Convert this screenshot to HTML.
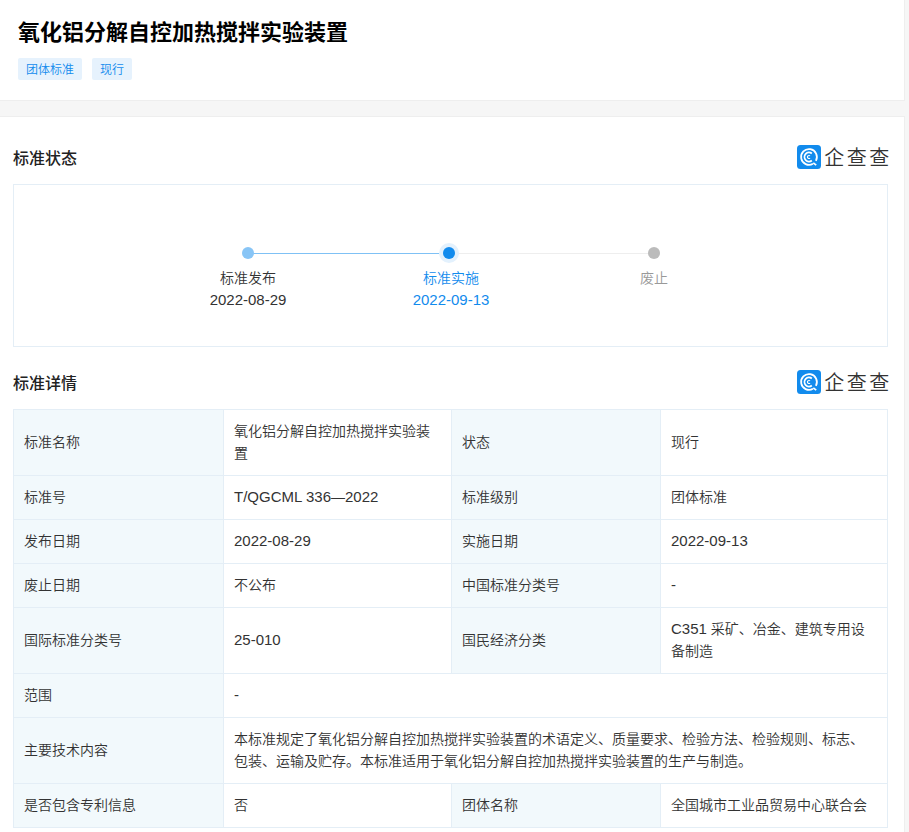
<!DOCTYPE html>
<html lang="zh-CN">
<head>
<meta charset="utf-8">
<title>氧化铝分解自控加热搅拌实验装置</title>
<style>
*{box-sizing:border-box;margin:0;padding:0}
html,body{width:909px;height:832px;overflow:hidden;background:#f6f6f6}
body{font-family:"Liberation Sans","Noto Sans CJK SC",sans-serif;font-size:14px;color:#333;font-weight:350;position:relative}
.card{position:absolute;left:0;width:905px;background:#fff;border-right:1px solid #eee;border-bottom:1px solid #eee}
#c1{top:0;height:101px}
#c2{top:116px;height:740px;border-top:1px solid #eee}
h1{position:absolute;left:18px;top:17px;font-size:22px;line-height:32px;font-weight:bold;color:#000;white-space:nowrap}
.tag{position:absolute;top:58px;height:22px;line-height:24px;font-size:12px;color:#128bed;background:#e6f2fd;border-radius:2px;text-align:center}
.sec{position:absolute;left:13px;font-size:16px;line-height:24px;font-weight:500;color:#222;white-space:nowrap}
.logo{position:absolute;left:797px;width:92px;height:24px}
#tl{position:absolute;left:13px;top:184px;width:875px;height:163px;border:1px solid #e4eef6}
.dot{position:absolute;border-radius:50%}
.ln{position:absolute;height:1px}
.lb{position:absolute;width:160px;text-align:center;font-size:14px;line-height:22px;white-space:nowrap}
table{position:absolute;left:13px;top:409px;width:874px;border-collapse:collapse;table-layout:fixed}
td{border:1px solid #e4eef6;padding:9px 12px 11px 10px;line-height:22px;font-size:14px;color:#333;vertical-align:middle;word-break:break-all}
td.k{background:#f2f9fc}
.n{font-size:15px}
#wm{position:absolute;left:0;top:0;width:909px;height:832px;overflow:hidden;pointer-events:none}
#wm span{position:absolute;transform:translate(-50%,-50%) rotate(-45deg);font:bold 16px "Liberation Sans",sans-serif;letter-spacing:4.5px;padding-left:4.5px;color:rgba(0,0,0,.022);white-space:nowrap}
</style>
</head>
<body>
<div class="card" id="c1">
  <h1>氧化铝分解自控加热搅拌实验装置</h1>
  <span class="tag" style="left:18px;width:64px">团体标准</span>
  <span class="tag" style="left:92px;width:40px">现行</span>
</div>
<div class="card" id="c2"></div>

<div class="sec" style="top:147px">标准状态</div>
<svg class="logo" style="top:145px" viewBox="0 0 92 24">
  <rect x="0" y="0" width="24" height="24" rx="3.5" fill="#128bed"/>
  <path d="M18.91 15.83A7.9 7.9 0 1 0 15.95 18.84" fill="none" stroke="#fff" stroke-width="1.8"/>
  <path d="M14.83 8.5A4.5 4.5 0 1 0 14.83 15.5" fill="none" stroke="#fff" stroke-width="1.8"/>
  <path d="M13.06 10.94A1.5 1.5 0 1 0 13.06 13.06" fill="none" stroke="#fff" stroke-width="1.2"/>
  <path d="M16.3 17.8L19.2 20.2" fill="none" stroke="#fff" stroke-width="1.7"/>
  <g font-family="Liberation Sans, Noto Sans CJK SC, sans-serif" font-size="20" font-weight="350" fill="#333">
    <text x="27.3" y="19.6">企</text><text x="49.8" y="19.6">查</text><text x="72.2" y="19.6">查</text>
  </g>
</svg>

<div id="tl"></div>
<div class="ln" style="left:248px;top:253px;width:201px;background:#7fc1f5"></div>
<div class="ln" style="left:449px;top:253px;width:205px;background:#eee"></div>
<div class="dot" style="left:242px;top:247px;width:12px;height:12px;background:#88c5f6"></div>
<div class="dot" style="left:439px;top:243px;width:20px;height:20px;background:#e3f1fd"></div>
<div class="dot" style="left:443px;top:247px;width:12px;height:12px;background:#128bed"></div>
<div class="dot" style="left:648px;top:247px;width:12px;height:12px;background:#bbb"></div>
<div class="lb" style="left:168px;top:267px;color:#333">标准发布</div>
<div class="lb" style="left:168px;top:289px;color:#333"><span class="n">2022-08-29</span></div>
<div class="lb" style="left:371px;top:267px;color:#128bed">标准实施</div>
<div class="lb" style="left:371px;top:289px;color:#128bed"><span class="n">2022-09-13</span></div>
<div class="lb" style="left:574px;top:267px;color:#999">废止</div>

<div class="sec" style="top:372px">标准详情</div>
<svg class="logo" style="top:370px" viewBox="0 0 92 24">
  <rect x="0" y="0" width="24" height="24" rx="3.5" fill="#128bed"/>
  <path d="M18.91 15.83A7.9 7.9 0 1 0 15.95 18.84" fill="none" stroke="#fff" stroke-width="1.8"/>
  <path d="M14.83 8.5A4.5 4.5 0 1 0 14.83 15.5" fill="none" stroke="#fff" stroke-width="1.8"/>
  <path d="M13.06 10.94A1.5 1.5 0 1 0 13.06 13.06" fill="none" stroke="#fff" stroke-width="1.2"/>
  <path d="M16.3 17.8L19.2 20.2" fill="none" stroke="#fff" stroke-width="1.7"/>
  <g font-family="Liberation Sans, Noto Sans CJK SC, sans-serif" font-size="20" font-weight="350" fill="#333">
    <text x="27.3" y="19.6">企</text><text x="49.8" y="19.6">查</text><text x="72.2" y="19.6">查</text>
  </g>
</svg>

<table>
<colgroup><col style="width:210px"><col style="width:228px"><col style="width:209px"><col style="width:227px"></colgroup>
<tr style="height:66px"><td class="k">标准名称</td><td>氧化铝分解自控加热搅拌实验装置</td><td class="k">状态</td><td>现行</td></tr>
<tr style="height:44px"><td class="k">标准号</td><td><span class="n">T/QGCML 336</span>—<span class="n">2022</span></td><td class="k">标准级别</td><td>团体标准</td></tr>
<tr style="height:44px"><td class="k">发布日期</td><td><span class="n">2022-08-29</span></td><td class="k">实施日期</td><td><span class="n">2022-09-13</span></td></tr>
<tr style="height:44px"><td class="k">废止日期</td><td>不公布</td><td class="k">中国标准分类号</td><td><span class="n">-</span></td></tr>
<tr style="height:66px"><td class="k">国际标准分类号</td><td><span class="n">25-010</span></td><td class="k">国民经济分类</td><td><span class="n">C351</span> 采矿、冶金、建筑专用设备制造</td></tr>
<tr style="height:44px"><td class="k">范围</td><td colspan="3"><span class="n">-</span></td></tr>
<tr style="height:66px"><td class="k">主要技术内容</td><td colspan="3">本标准规定了氧化铝分解自控加热搅拌实验装置的术语定义、质量要求、检验方法、检验规则、标志、包装、运输及贮存。本标准适用于氧化铝分解自控加热搅拌实验装置的生产与制造。</td></tr>
<tr style="height:44px"><td class="k">是否包含专利信息</td><td>否</td><td class="k">团体名称</td><td>全国城市工业品贸易中心联合会</td></tr>
</table>
<div id="wm"><span style="left:18px;top:-19px">EEQ9N1Z</span><span style="left:-17px;top:129px">EEQ9N1Z</span><span style="left:75px;top:37px">EEQ9N1Z</span><span style="left:40px;top:186px">EEQ9N1Z</span><span style="left:132px;top:94px">EEQ9N1Z</span><span style="left:224px;top:2px">EEQ9N1Z</span><span style="left:4px;top:334px">EEQ9N1Z</span><span style="left:96px;top:242px">EEQ9N1Z</span><span style="left:188px;top:150px">EEQ9N1Z</span><span style="left:280px;top:58px">EEQ9N1Z</span><span style="left:372px;top:-34px">EEQ9N1Z</span><span style="left:-32px;top:483px">EEQ9N1Z</span><span style="left:60px;top:391px">EEQ9N1Z</span><span style="left:152px;top:299px">EEQ9N1Z</span><span style="left:244px;top:207px">EEQ9N1Z</span><span style="left:336px;top:115px">EEQ9N1Z</span><span style="left:428px;top:23px">EEQ9N1Z</span><span style="left:25px;top:539px">EEQ9N1Z</span><span style="left:117px;top:447px">EEQ9N1Z</span><span style="left:209px;top:355px">EEQ9N1Z</span><span style="left:301px;top:263px">EEQ9N1Z</span><span style="left:393px;top:171px">EEQ9N1Z</span><span style="left:485px;top:79px">EEQ9N1Z</span><span style="left:577px;top:-13px">EEQ9N1Z</span><span style="left:-10px;top:688px">EEQ9N1Z</span><span style="left:82px;top:596px">EEQ9N1Z</span><span style="left:174px;top:504px">EEQ9N1Z</span><span style="left:266px;top:412px">EEQ9N1Z</span><span style="left:358px;top:320px">EEQ9N1Z</span><span style="left:450px;top:228px">EEQ9N1Z</span><span style="left:542px;top:136px">EEQ9N1Z</span><span style="left:634px;top:44px">EEQ9N1Z</span><span style="left:726px;top:-48px">EEQ9N1Z</span><span style="left:-46px;top:836px">EEQ9N1Z</span><span style="left:46px;top:744px">EEQ9N1Z</span><span style="left:138px;top:652px">EEQ9N1Z</span><span style="left:230px;top:560px">EEQ9N1Z</span><span style="left:322px;top:468px">EEQ9N1Z</span><span style="left:414px;top:376px">EEQ9N1Z</span><span style="left:506px;top:284px">EEQ9N1Z</span><span style="left:598px;top:192px">EEQ9N1Z</span><span style="left:690px;top:100px">EEQ9N1Z</span><span style="left:782px;top:8px">EEQ9N1Z</span><span style="left:102px;top:801px">EEQ9N1Z</span><span style="left:194px;top:709px">EEQ9N1Z</span><span style="left:286px;top:617px">EEQ9N1Z</span><span style="left:378px;top:525px">EEQ9N1Z</span><span style="left:470px;top:433px">EEQ9N1Z</span><span style="left:562px;top:341px">EEQ9N1Z</span><span style="left:654px;top:249px">EEQ9N1Z</span><span style="left:746px;top:157px">EEQ9N1Z</span><span style="left:838px;top:65px">EEQ9N1Z</span><span style="left:930px;top:-27px">EEQ9N1Z</span><span style="left:159px;top:857px">EEQ9N1Z</span><span style="left:251px;top:765px">EEQ9N1Z</span><span style="left:343px;top:673px">EEQ9N1Z</span><span style="left:435px;top:581px">EEQ9N1Z</span><span style="left:527px;top:489px">EEQ9N1Z</span><span style="left:619px;top:397px">EEQ9N1Z</span><span style="left:711px;top:305px">EEQ9N1Z</span><span style="left:803px;top:213px">EEQ9N1Z</span><span style="left:895px;top:121px">EEQ9N1Z</span><span style="left:308px;top:822px">EEQ9N1Z</span><span style="left:400px;top:730px">EEQ9N1Z</span><span style="left:492px;top:638px">EEQ9N1Z</span><span style="left:584px;top:546px">EEQ9N1Z</span><span style="left:676px;top:454px">EEQ9N1Z</span><span style="left:768px;top:362px">EEQ9N1Z</span><span style="left:860px;top:270px">EEQ9N1Z</span><span style="left:952px;top:178px">EEQ9N1Z</span><span style="left:364px;top:878px">EEQ9N1Z</span><span style="left:456px;top:786px">EEQ9N1Z</span><span style="left:548px;top:694px">EEQ9N1Z</span><span style="left:640px;top:602px">EEQ9N1Z</span><span style="left:732px;top:510px">EEQ9N1Z</span><span style="left:824px;top:418px">EEQ9N1Z</span><span style="left:916px;top:326px">EEQ9N1Z</span><span style="left:512px;top:843px">EEQ9N1Z</span><span style="left:604px;top:751px">EEQ9N1Z</span><span style="left:696px;top:659px">EEQ9N1Z</span><span style="left:788px;top:567px">EEQ9N1Z</span><span style="left:880px;top:475px">EEQ9N1Z</span><span style="left:661px;top:807px">EEQ9N1Z</span><span style="left:753px;top:715px">EEQ9N1Z</span><span style="left:845px;top:623px">EEQ9N1Z</span><span style="left:937px;top:531px">EEQ9N1Z</span><span style="left:718px;top:864px">EEQ9N1Z</span><span style="left:810px;top:772px">EEQ9N1Z</span><span style="left:902px;top:680px">EEQ9N1Z</span><span style="left:866px;top:828px">EEQ9N1Z</span><span style="left:958px;top:736px">EEQ9N1Z</span></div>
</body>
</html>
